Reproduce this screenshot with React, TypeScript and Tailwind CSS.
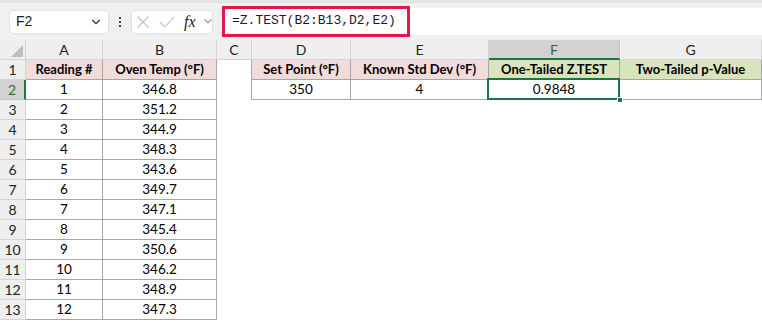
import { ChevronDown } from 'lucide-react';

const cols = ['A', 'B', 'C', 'D', 'E', 'F', 'G'];

const readings = [
  ['1', '346.8'],
  ['2', '351.2'],
  ['3', '344.9'],
  ['4', '348.3'],
  ['5', '343.6'],
  ['6', '349.7'],
  ['7', '347.1'],
  ['8', '345.4'],
  ['9', '350.6'],
  ['10', '346.2'],
  ['11', '348.9'],
  ['12', '347.3'],
];

const cell = 'flex items-center justify-center h-5 text-[13.5px] text-black';
const hd = 'font-bold text-[13px]';
const tb = 'border-r border-b border-[#a6a6a6]';

function Toolbar() {
  return (
    <div className="h-10 bg-[#f0f0f0] border-t-[3px] border-[#e4e4e4] flex items-center pl-[9px] pr-0">
      <div className="w-[100px] h-6 bg-white rounded-[4px] border border-[#e2e2e2] flex items-center justify-between pl-[6px] pr-[5px] text-[14px] text-[#222] font-['Liberation_Sans',sans-serif]">
        <span>F2</span>
        <ChevronDown size={14} strokeWidth={2} className="text-[#333]" />
      </div>
      <div className="w-[22px] flex flex-col items-center gap-[2px]">
        <span className="w-[2px] h-[2px] bg-[#444]"></span>
        <span className="w-[2px] h-[2px] bg-[#444]"></span>
        <span className="w-[2px] h-[2px] bg-[#444]"></span>
      </div>
      <div className="w-[82px] h-6 bg-white rounded-[4px] border border-[#e2e2e2] flex items-center pl-[5px]">
        <svg width="12" height="12" viewBox="0 0 12 12" className="text-[#c2c2c2]">
          <path d="M0.5 0.5 11.5 11.5 M11.5 0.5 0.5 11.5" stroke="currentColor" strokeWidth="1.1" fill="none" />
        </svg>
        <svg width="16" height="12" viewBox="0 0 16 12" className="ml-[10px] text-[#c2c2c2]">
          <path d="M0.8 6.2 5.8 11 15.2 0.8" stroke="currentColor" strokeWidth="1.1" fill="none" />
        </svg>
        <span className="ml-[9px] font-['Liberation_Serif',serif] italic text-[16px] text-[#222] leading-none w-[14px]">fx</span>
        <svg width="8" height="5" viewBox="0 0 8 5" className="ml-[6px] text-[#999]">
          <path d="M0.5 0.5 4 4 7.5 0.5" stroke="currentColor" strokeWidth="1.1" fill="none" />
        </svg>
      </div>
      <div className="ml-[9px] flex-1 h-[27px] bg-white flex items-center relative -mt-[1px]">
        <div className="h-[31px] w-[188px] border-[3px] border-[#e3174b] flex items-center pl-[7px] font-['Liberation_Mono',monospace] text-[13px] text-[#1a1a2a]">
          =Z.TEST(B2:B13,D2,E2)
        </div>
      </div>
    </div>
  );
}

function HeaderRow() {
  return (
    <>
      <div className="h-5 bg-[#efefef] border-r border-b border-[#d4d4d4] relative">
        <div className="absolute right-[2px] bottom-[2px] w-0 h-0 border-l-[12px] border-l-transparent border-b-[12px] border-b-[#bfbfbf]"></div>
      </div>
      {cols.map((c) =>
        c === 'F' ? (
          <div key={c} className="h-5 bg-[#d2d2d2] border-r border-[#c6c6c6] border-b-2 border-b-[#217346] flex items-center justify-center text-[14px] text-[#217346] pt-[1px]">
            {c}
          </div>
        ) : (
          <div key={c} className="h-5 bg-[#efefef] border-r border-b border-[#d4d4d4] flex items-center justify-center text-[14px] text-[#222]">
            {c}
          </div>
        )
      )}
    </>
  );
}

function RowHead({ n }: { n: number }) {
  if (n === 2) {
    return (
      <div className="h-5 bg-[#d2d2d2] border-r-2 border-r-[#217346] border-b border-b-[#c6c6c6] flex items-center justify-center text-[14px] text-[#217346]">
        {n}
      </div>
    );
  }
  return (
    <div className="h-5 bg-[#efefef] border-r border-b border-[#d4d4d4] flex items-center justify-center text-[14px] text-[#222]">
      {n}
    </div>
  );
}

export default function App() {
  return (
    <div className="w-[762px] h-[322px] bg-white overflow-hidden font-['Lato',sans-serif]">
      <Toolbar />
      <div className="grid grid-cols-[26px_77px_114px_35px_99px_138px_131px_142px]">
        <HeaderRow />

        <RowHead n={1} />
        <div className={`${cell} ${tb} ${hd} bg-[#f2dcdb]`}>Reading #</div>
        <div className={`${cell} ${tb} ${hd} bg-[#f2dcdb]`}>Oven Temp (°F)</div>
        <div className={`${cell} border-r border-[#a6a6a6]`}></div>
        <div className={`${cell} ${tb} ${hd} bg-[#f2dcdb]`}>Set Point (°F)</div>
        <div className={`${cell} ${tb} ${hd} bg-[#f2dcdb]`}>Known Std Dev (°F)</div>
        <div className={`${cell} ${tb} ${hd} bg-[#d8e4bc]`}>One-Tailed Z.TEST</div>
        <div className={`${cell} ${tb} ${hd} bg-[#d8e4bc]`}>Two-Tailed p-Value</div>

        {readings.map(([a, b], i) => {
          const n = i + 2;
          return (
            <div key={n} className="contents">
              <RowHead n={n} />
              <div className={`${cell} ${tb}`}>{a}</div>
              <div className={`${cell} ${tb}`}>{b}</div>
              {n === 2 ? (
                <>
                  <div className={`${cell} border-r border-[#a6a6a6]`}></div>
                  <div className={`${cell} ${tb}`}>350</div>
                  <div className={`${cell} ${tb}`}>4</div>
                  <div className={`${cell} ${tb} relative`}>
                    0.9848
                    <div className="absolute -left-[2px] -top-[2px] -right-[1px] -bottom-[1px] border-2 border-[#217346]"></div>
                    <div className="absolute -right-[4px] -bottom-[4px] w-[6px] h-[6px] bg-[#217346] border border-white"></div>
                  </div>
                  <div className={`${cell} ${tb}`}></div>
                </>
              ) : (
                <>
                  <div className={cell}></div>
                  <div className={cell}></div>
                  <div className={cell}></div>
                  <div className={cell}></div>
                  <div className={cell}></div>
                </>
              )}
            </div>
          );
        })}
      </div>
    </div>
  );
}
